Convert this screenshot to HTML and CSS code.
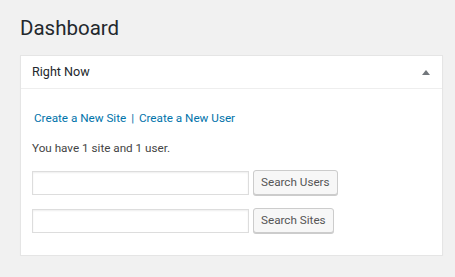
FILE: index.html
```html
<!doctype html>
<html lang="en">
  <head>
    <meta charset="UTF-8" />
    <title>Dashboard</title>
    <link rel="stylesheet" href="styles.css">
  </head>
  <body>
    <div class="wrap">
      <h1>Dashboard</h1>

      <div class="postbox">
        <div class="postbox-header">
          <h2>Right Now</h2>
          <span class="toggle-indicator"></span>
        </div>
        <div class="inside">
          <p class="sub-links">
            <a href="#">Create a New Site</a>
            <span class="sep">|</span>
            <a href="#">Create a New User</a>
          </p>
          <p class="summary">You have 1 site and 1 user.</p>

          <form class="search-form">
            <input type="search" class="search-input" />
            <button type="button" class="button">Search Users</button>
          </form>
          <form class="search-form">
            <input type="search" class="search-input" />
            <button type="button" class="button">Search Sites</button>
          </form>
        </div>
      </div>
    </div>
  </body>
</html>
```

FILE: styles.css
```css
* {
  margin: 0;
  padding: 0;
  box-sizing: border-box;
}

body {
  font-family: Roboto, "Noto Sans", sans-serif;
  font-size: 11.7px;
  line-height: 18px;
  color: #444;
  background: #f1f1f1;
}

.wrap {
  padding: 14px 12px 0 20px;
}

h1 {
  font-size: 20.5px;
  font-weight: 400;
  line-height: 29px;
  color: #23282d;
  margin-bottom: 12px;
}

.postbox {
  background: #fff;
  border: 1px solid #e5e5e5;
  box-shadow: 0 1px 1px rgba(0, 0, 0, 0.04);
}

.postbox-header {
  display: flex;
  align-items: center;
  justify-content: space-between;
  height: 33px;
  padding: 0 12px 0 11px;
  border-bottom: 1px solid #eee;
}

.postbox-header h2 {
  font-size: 12.6px;
  font-weight: 400;
  color: #23282d;
}

.toggle-indicator {
  width: 0;
  height: 0;
  border-left: 4px solid transparent;
  border-right: 4px solid transparent;
  border-bottom: 5px solid #72777c;
}

.inside {
  padding: 20px 12px 22px 11px;
}

.sub-links {
  padding-left: 2px;
  margin-bottom: 12px;
}

.sub-links a {
  color: #0073aa;
  text-decoration: none;
}

.sep {
  color: #0073aa;
  margin: 0 2px;
}

.summary {
  margin-bottom: 13px;
}

.search-form {
  display: flex;
  align-items: center;
  gap: 4px;
  margin-bottom: 13px;
}

.search-form:last-child {
  margin-bottom: 0;
}

.search-input {
  width: 217px;
  height: 24px;
  border: 1px solid #ddd;
  box-shadow: inset 0 1px 2px rgba(0, 0, 0, 0.07);
  background: #fff;
}

.button {
  font-family: inherit;
  font-size: 11.7px;
  color: #555;
  background: #f7f7f7;
  border: 1px solid #ccc;
  border-radius: 3px;
  box-shadow: 0 1px 0 #ccc;
  height: 25px;
  padding: 0 7px 1px;
  cursor: pointer;
}
```
